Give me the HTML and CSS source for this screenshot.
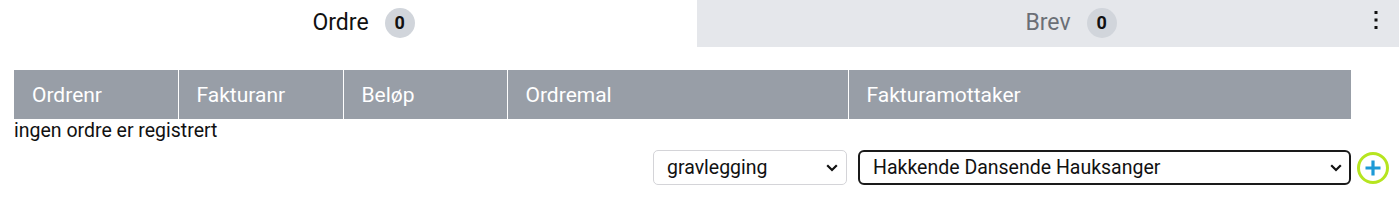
FILE: index.html
```html
<!DOCTYPE html>
<html lang="no">
<head>
<meta charset="utf-8">
<title>Ordre</title>
<link rel="stylesheet" href="styles.css">
</head>
<body>
<nav class="tabs">
  <div class="tab tab-active">
    <span class="tab-label">Ordre<span class="badge">0</span></span>
  </div>
  <div class="tab tab-inactive">
    <span class="tab-label">Brev<span class="badge">0</span></span>
    <button class="kebab" aria-label="Meny">
      <svg width="6" height="20" viewBox="0 0 6 20"><rect x="1.5" y="1" width="3" height="3"/><rect x="1.5" y="8.5" width="3" height="3"/><rect x="1.5" y="16" width="3" height="3"/></svg>
    </button>
  </div>
</nav>
<main class="content">
  <table class="orders">
    <colgroup>
      <col class="c1"><col class="c2"><col class="c3"><col class="c4"><col class="c5">
    </colgroup>
    <thead>
      <tr><th>Ordrenr</th><th>Fakturanr</th><th>Beløp</th><th>Ordremal</th><th>Fakturamottaker</th></tr>
    </thead>
  </table>
  <p class="empty">ingen ordre er registrert</p>
  <div class="controls">
    <span class="sel-wrap">
      <select class="sel sel-template"><option>gravlegging</option></select>
      <svg class="chev" width="12" height="8" viewBox="0 0 12 8"><path d="M1.2 1.2L6 6l4.8-4.8" fill="none" stroke="#111" stroke-width="2.2"/></svg>
    </span>
    <span class="sel-wrap sel-wrap-recipient">
      <select class="sel sel-recipient"><option>Hakkende Dansende Hauksanger</option></select>
      <svg class="chev" width="12" height="8" viewBox="0 0 12 8"><path d="M1.2 1.2L6 6l4.8-4.8" fill="none" stroke="#111" stroke-width="2.2"/></svg>
    </span>
    <button class="add" aria-label="Legg til">
      <svg width="32" height="32" viewBox="0 0 32 32"><circle cx="16" cy="16" r="14.5" fill="#fff" stroke="#b6e51f" stroke-width="3"/><path d="M16 8.5v15M8.5 16h15" stroke="#1d9ad6" stroke-width="3.2"/></svg>
    </button>
  </div>
</main>
</body>
</html>
```
FILE: styles.css
```css
* { box-sizing: border-box; }
body {
  margin: 0;
  font-family: Roboto, "Liberation Sans", Arial, sans-serif;
  color: #111;
  background: #fff;
}
.tabs {
  display: flex;
  height: 47px;
}
.tab {
  display: flex;
  align-items: center;
  justify-content: center;
  position: relative;
  font-size: 23px;
}
.tab-active {
  width: 697px;
  padding-right: 16px;
  color: #111;
}
.tab-inactive {
  flex: 1;
  background: #e5e7eb;
  color: #6b6f76;
}
.tab-label {
  position: relative;
  line-height: 28px;
  top: -1px;
}
.badge {
  position: absolute;
  left: calc(100% + 16px);
  top: -1px;
  width: 30px;
  height: 30px;
  border-radius: 50%;
  background: #d1d5db;
  color: #111;
  font-size: 18px;
  font-weight: 700;
  display: flex;
  align-items: center;
  justify-content: center;
}
.kebab {
  position: absolute;
  right: 20px;
  top: 10px;
  border: 0;
  background: none;
  padding: 0;
  width: 6px;
  height: 20px;
  fill: #111;
}
.kebab svg { display: block; }
.content {
  padding: 23px 10px 0 14px;
}
.orders {
  width: 1337px;
  border-collapse: collapse;
  table-layout: fixed;
}
.c1 { width: 164px; }
.c2 { width: 165px; }
.c3 { width: 164px; }
.c4 { width: 341px; }
.c5 { width: 503px; }
.orders th {
  background: #989ea7;
  color: #fff;
  font-weight: 400;
  font-size: 21px;
  text-align: left;
  height: 49px;
  padding: 0 0 0 18px;
  border-left: 1px solid #fff;
}
.orders th:first-child { border-left: 0; }
.empty {
  margin: 0;
  font-size: 19.5px;
  line-height: 24px;
}
.controls {
  display: flex;
  justify-content: flex-end;
  align-items: center;
  margin-top: 7px;
}
.sel-wrap {
  position: relative;
  display: block;
}
.sel-wrap-recipient { margin-left: 11px; }
.sel {
  display: block;
  appearance: none;
  -webkit-appearance: none;
  height: 35px;
  font-family: Roboto, "Liberation Sans", Arial, sans-serif;
  font-size: 19.5px;
  color: #111;
  background: #fff;
  padding: 0 30px 0 13px;
}
.chev {
  position: absolute;
  right: 9px;
  top: 14px;
  pointer-events: none;
}
.sel-template {
  width: 194px;
  border: 1px solid #d4d4d8;
  border-radius: 5px;
}
.sel-recipient {
  width: 493px;
  border: 2px solid #1a1a1a;
  border-radius: 6px;
}
.add {
  margin-left: 6px;
  border: 0;
  padding: 0;
  background: none;
  width: 32px;
  height: 32px;
}
.add svg { display: block; }
```
